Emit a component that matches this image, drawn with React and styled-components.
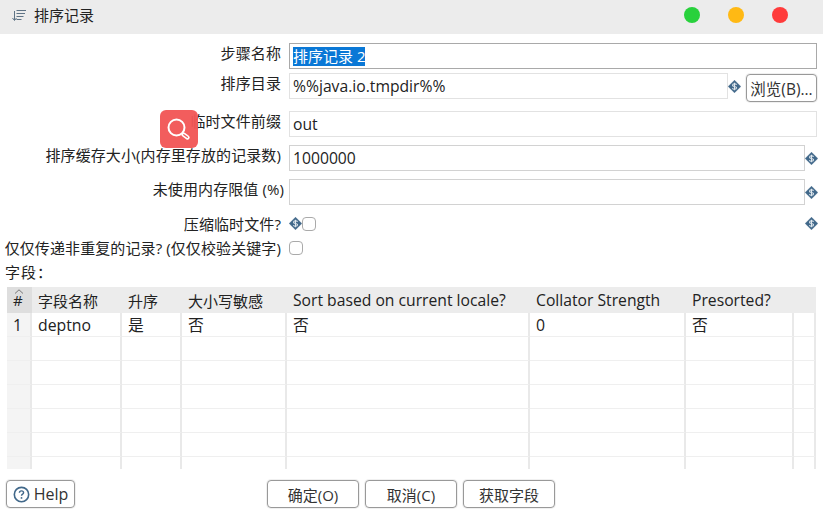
import React from "react";
import styled, { createGlobalStyle } from "styled-components";

const COLUMNS = "25px 90px 60px 105px 243px 156px 108px 22px";

const HEADERS = ["#", "字段名称", "升序", "大小写敏感", "Sort based on current locale?", "Collator Strength", "Presorted?", ""];
const EMPTY_ROW = ["", "", "", "", "", "", "", ""];
const ROWS = [
  ["1", "deptno", "是", "否", "否", "0", "否", ""],
  EMPTY_ROW,
  EMPTY_ROW,
  EMPTY_ROW,
  EMPTY_ROW,
  EMPTY_ROW,
  EMPTY_ROW,
];

const VarIcon = () => (
  <VarMark viewBox="0 0 14 14">
    <path d="M7 0.3 13.7 7 7 13.7 0.3 7Z" fill="#41688a" stroke="#41688a" strokeWidth="0.6" strokeLinejoin="round" />
    <path d="M9.2 5.2C8.8 4.4 7.9 4 7 4 5.8 4 4.9 4.6 4.9 5.6 4.9 7.5 9.2 6.5 9.2 8.4 9.2 9.4 8.2 10 7 10 6 10 5.1 9.5 4.8 8.7M7 3V11" fill="none" stroke="#e0e8ee" strokeWidth="1.2" />
  </VarMark>
);

export default function App() {
  return (
    <Page>
      <GlobalStyle />
      <TitleBar>
        <svg width="16" height="14" viewBox="0 0 16 14" fill="none" stroke="#5f7486" strokeWidth="1">
          <path d="M2.5 3V12M.5 10 2.5 12.5 4.5 10" />
          <path d="M4.5 2.5H14M4.5 5.5H13M4.5 8.5H11.5M4.5 11.5H9.5" />
        </svg>
        <Title>排序记录</Title>
        <Dots>
          <Dot color="#28d13c" />
          <Dot color="#ffb914" />
          <Dot color="#ff3b3b" />
        </Dots>
      </TitleBar>

      <Form>
        <Row $top={9}>
          <Label>步骤名称</Label>
          <Field $strong>
            <Selected>排序记录 2</Selected>
          </Field>
        </Row>
        <Row $top={4}>
          <Label>排序目录</Label>
          <Field $light $width={439}>%%java.io.tmpdir%%</Field>
          <VarIcon />
          <BrowseButton>浏览(B)...</BrowseButton>
        </Row>
        <Row $top={12}>
          <Label>临时文件前缀</Label>
          <Field $light>out</Field>
        </Row>
        <Row $top={8}>
          <Label>排序缓存大小(内存里存放的记录数)</Label>
          <Field $width={516}>1000000</Field>
          <VarIcon />
        </Row>
        <Row $top={8}>
          <Label $overhang={3}>未使用内存限值 (%)</Label>
          <Field $width={516} />
          <VarIcon />
        </Row>
        <CheckRow $top={11}>
          <Label>压缩临时文件?</Label>
          <VarIcon />
          <Check />
          <Spacer />
          <VarIcon />
        </CheckRow>
        <CheckRow $top={9}>
          <Label>仅仅传递非重复的记录? (仅仅校验关键字)</Label>
          <Check />
        </CheckRow>
      </Form>

      <SectionLabel>字段：</SectionLabel>

      <Table>
        <HeaderRow>
          {HEADERS.map((text, i) => (
            <HeaderCell key={i} $index={i === 0} $latin={i > 3}>
              {i === 0 && (
                <SortMark viewBox="0 0 10 5" fill="none" stroke="#777" strokeWidth="1">
                  <path d="M1 4.5 5 .8 9 4.5" />
                </SortMark>
              )}
              {text}
            </HeaderCell>
          ))}
        </HeaderRow>
        {ROWS.map((row, r) => (
          <BodyRow key={r}>
            {row.map((text, i) => (
              <BodyCell key={i} $index={i === 0}>{text}</BodyCell>
            ))}
          </BodyRow>
        ))}
      </Table>

      <Footer>
        <HelpButton $width={69}>
          <svg width="17" height="17" viewBox="0 0 18 18" fill="none">
            <circle cx="9" cy="9" r="7.6" stroke="#41688a" strokeWidth="1.7" />
            <path d="M6.8 7.2C6.8 5.9 7.8 5.2 9 5.2 10.2 5.2 11.2 6 11.2 7.1 11.2 8.6 9 8.7 9 10.4" stroke="#41688a" strokeWidth="1.5" />
            <circle cx="9" cy="12.6" r="1" fill="#41688a" />
          </svg>
          Help
        </HelpButton>
        <Actions>
          <Button $width={92}>确定(O)</Button>
          <Button $width={92}>取消(C)</Button>
          <Button $width={92}>获取字段</Button>
        </Actions>
      </Footer>

      <SearchBadge>
        <svg width="26" height="26" viewBox="0 0 26 26" fill="none" strokeLinecap="round">
          <circle cx="10.5" cy="11.5" r="8" stroke="#fff" strokeWidth="2" />
          <path d="M17.5 18.5 21.5 21.5" stroke="#fff" strokeWidth="4.4" />
          <path d="M17.8 18.7 21.3 21.3" stroke="#f25555" strokeWidth="1.4" />
        </svg>
      </SearchBadge>
    </Page>
  );
}

const GlobalStyle = createGlobalStyle`
  html, body {
    margin: 0;
    padding: 0;
    background: #fff;
  }
`;

const Page = styled.div`
  position: relative;
  width: 823px;
  height: 514px;
  overflow: hidden;
  background: #fff;
  color: #222;
  font-family: "Open Sans", "Noto Sans CJK SC", sans-serif;
  font-size: 15px;
`;

const TitleBar = styled.div`
  box-sizing: border-box;
  display: flex;
  align-items: center;
  height: 34px;
  padding: 0 0 4px 12px;
  background: #ececec;
`;

const Title = styled.span`
  margin: 0 0 2px 6px;
  font-size: 15px;
`;

const Dots = styled.div`
  display: flex;
  gap: 28px;
  margin-left: auto;
  margin-right: 35px;
`;

const Dot = styled.span`
  width: 16px;
  height: 16px;
  border-radius: 50%;
  background: ${(props) => props.color};
`;

const Form = styled.div`
  display: flex;
  flex-direction: column;
`;

const Row = styled.div`
  display: flex;
  align-items: flex-start;
  height: 26px;
  margin-top: ${(props) => props.$top}px;
`;

const CheckRow = styled(Row)`
  height: 15px;
  align-items: center;
`;

const Label = styled.label`
  flex: none;
  width: ${(props) => 281 + (props.$overhang || 0)}px;
  margin-right: ${(props) => 8 - (props.$overhang || 0)}px;
  text-align: right;
  letter-spacing: 0.1px;
  white-space: nowrap;
  line-height: 20px;
`;

const Field = styled.div`
  box-sizing: border-box;
  flex: none;
  display: flex;
  align-items: center;
  width: ${(props) => props.$width || 528}px;
  height: 26px;
  padding-left: 3px;
  border: 1px solid ${(props) => (props.$strong ? "#a9a9a9" : props.$light ? "#e2e2e2" : "#d2d2d2")};
  font-size: ${(props) => (props.$strong ? 15 : 15.7)}px;
  white-space: nowrap;
`;

const Selected = styled.span`
  background: #0a78d6;
  color: #fff;
  line-height: 19px;
`;

const VarMark = styled.svg`
  flex: none;
  width: 13px;
  height: 13px;
  align-self: center;
`;

const Spacer = styled.span`
  flex: none;
  width: 489px;
`;

const Button = styled.button`
  box-sizing: border-box;
  display: flex;
  align-items: center;
  justify-content: center;
  gap: 3px;
  width: ${(props) => props.$width}px;
  height: 28px;
  padding: 0;
  border: 1px solid #999;
  border-radius: 4px;
  background: #fff;
  box-shadow: 0 0 0 1px #f0f0f0;
  color: #333;
  font: inherit;
  font-size: 15px;
`;

const HelpButton = styled(Button)`
  gap: 4px;
  font-size: 16px;
`;

const BrowseButton = styled(Button)`
  flex: none;
  width: 71px;
  margin: 1px 0 0 5px;
  font-size: 15.5px;
`;

const Check = styled.span`
  flex: none;
  box-sizing: border-box;
  width: 14px;
  height: 14px;
  border: 1px solid #aaa;
  border-radius: 4px;
  background: #fff;
`;

const SectionLabel = styled.div`
  margin: 8px 0 0 5px;
  height: 24px;
  letter-spacing: 1px;
  line-height: 18px;
`;

const Table = styled.div`
  width: 809px;
  height: 182px;
  margin-left: 7px;
  overflow: hidden;
`;

const HeaderRow = styled.div`
  display: grid;
  grid-template-columns: ${COLUMNS};
  height: 26px;
  background: #ececec;
`;

const HeaderCell = styled.div`
  position: relative;
  display: flex;
  align-items: center;
  padding-left: 6px;
  background: ${(props) => (props.$index ? "#dedede" : "transparent")};
  font-size: ${(props) => (props.$latin ? 15.7 : 15)}px;
  white-space: nowrap;
`;

const SortMark = styled.svg`
  position: absolute;
  top: 2px;
  left: 7px;
  width: 10px;
  height: 5px;
`;

const BodyRow = styled.div`
  display: grid;
  grid-template-columns: ${COLUMNS};
  height: 24px;
`;

const BodyCell = styled.div`
  box-sizing: border-box;
  display: flex;
  align-items: center;
  padding-left: 6px;
  border-right: 2px solid #e9e9e9;
  border-bottom: 1px solid #efefef;
  background: ${(props) => (props.$index ? "#f4f4f4" : "#fff")};
  font-size: 15.8px;
`;

const Footer = styled.div`
  display: flex;
  margin: 11px 0 0 6px;
`;

const Actions = styled.div`
  display: flex;
  gap: 6px;
  margin-left: 192px;
`;

const SearchBadge = styled.div`
  position: absolute;
  top: 110px;
  left: 160px;
  display: flex;
  align-items: center;
  justify-content: center;
  width: 38px;
  height: 38px;
  border-radius: 6px;
  background: #f25555;
  opacity: 0.95;
`;
